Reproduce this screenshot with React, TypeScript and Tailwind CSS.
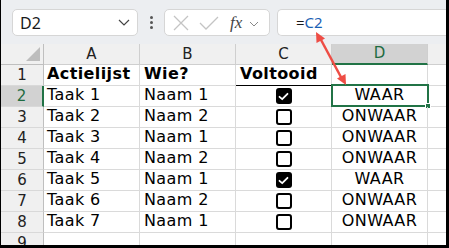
import { ReactNode } from "react"

const rows = [
  { task: "Taak 1", who: "Naam 1", done: true },
  { task: "Taak 2", who: "Naam 2", done: false },
  { task: "Taak 3", who: "Naam 1", done: false },
  { task: "Taak 4", who: "Naam 2", done: false },
  { task: "Taak 5", who: "Naam 1", done: true },
  { task: "Taak 6", who: "Naam 2", done: false },
  { task: "Taak 7", who: "Naam 1", done: false },
]

const cellFont = { fontFamily: '"DejaVu Sans", Verdana, sans-serif' }

const Checkbox = ({ checked }: { checked: boolean }) =>
  checked ? (
    <div className="flex size-[16px] items-center justify-center rounded-[3px] bg-black">
      <svg width="11" height="9" viewBox="0 0 11 9">
        <path d="M1.5 4.8 L4.2 7.2 L9.5 1.8" fill="none" stroke="white" strokeWidth="1.8" strokeLinecap="round" strokeLinejoin="round" />
      </svg>
    </div>
  ) : (
    <div className="size-[16px] rounded-[3px] border-2 border-black bg-white" />
  )

const RowHead = ({ n, active }: { n: number; active?: boolean }) => (
  <div
    className={`flex h-[21px] items-center justify-center border-b border-[#d9d9d9] text-[15px] ${
      active ? "border-r-2 border-r-[#217346] bg-[#d2d2d2] text-[#1e6b41]" : "border-r border-r-[#bfbfbf] bg-[#f0f0f0] text-[#222]"
    }`}
  >
    {n}
  </div>
)

const Cell = ({ children, className = "" }: { children?: ReactNode; className?: string }) => (
  <div className={`flex h-[21px] items-end border-r border-b border-[#dadada] pb-[2px] text-[16px] leading-[19px] tracking-[0.4px] text-black ${className}`}>
    {children}
  </div>
)

export default function App() {
  return (
    <div className="relative h-[248px] w-[449px] overflow-hidden border-b-[3px] border-l border-r-[3px] border-black bg-white">
      {/* formula bar */}
      <div className="flex h-[44px] items-start bg-[#eceef1] pt-[9px]" style={{ fontFamily: '"Noto Sans", "Open Sans", sans-serif' }}>
        <div className="ml-[11px] flex h-[27px] w-[126px] items-center justify-between rounded-[5px] border border-[#d6d6d6] bg-white pl-[7px] pr-[7px]">
          <span className="text-[16px] text-[#1a1a1a]">D2</span>
          <svg width="12" height="7" viewBox="0 0 12 7">
            <path d="M1 1 L6 6 L11 1" fill="none" stroke="#444" strokeWidth="1.2" />
          </svg>
        </div>
        <div className="flex h-[27px] w-[26px] flex-col items-center justify-center gap-[2px]">
          <span className="size-[3px] rounded-full bg-[#555]" />
          <span className="size-[3px] rounded-full bg-[#555]" />
          <span className="size-[3px] rounded-full bg-[#555]" />
        </div>
        <div className="flex h-[27px] w-[106px] items-center rounded-[5px] border border-[#d6d6d6] bg-white pl-[7px]">
          <svg width="18" height="18" viewBox="0 0 18 18">
            <path d="M2 2 L16 16 M16 2 L2 16" stroke="#c4c4c4" strokeWidth="1.3" />
          </svg>
          <svg width="20" height="16" viewBox="0 0 20 16" className="ml-[9px]">
            <path d="M1 8 L7 14 L19 2" fill="none" stroke="#c4c4c4" strokeWidth="1.3" />
          </svg>
          <span className="ml-[11px] text-[17px] italic text-[#444]" style={{ fontFamily: '"Liberation Serif", serif' }}>
            fx
          </span>
          <svg width="10" height="6" viewBox="0 0 10 6" className="ml-[7px] mt-[2px]">
            <path d="M1 1 L5 5 L9 1" fill="none" stroke="#888" strokeWidth="1" />
          </svg>
        </div>
        <div className="ml-[7px] flex h-[27px] flex-1 items-center rounded-l-[5px] border border-r-0 border-[#d6d6d6] bg-white pl-[18px] text-[15px] text-[#1a1a1a]">
          =<span className="text-[#1a5fb4]">C2</span>
        </div>
      </div>

      {/* sheet */}
      <div className="grid grid-cols-[43px_96px_96px_96px_96px_1fr]" style={cellFont}>
        <div className="relative h-[21px] border-r border-b border-[#bfbfbf] bg-[#f0f0f0]">
          <svg width="14" height="14" viewBox="0 0 14 14" className="absolute bottom-[3px] right-[3px]">
            <path d="M14 0 L14 14 L0 14 Z" fill="#bdbdbd" />
          </svg>
        </div>
        {["A", "B", "C"].map((c) => (
          <div key={c} className="flex h-[21px] items-center justify-center border-r border-b border-[#cfcfcf] bg-[#f0f0f0] text-[15px] text-[#222]">
            {c}
          </div>
        ))}
        <div className="flex h-[21px] items-center justify-center border-r border-[#cfcfcf] border-b-2 border-b-[#217346] bg-[#d2d2d2] text-[15px] text-[#1e6b41]">
          D
        </div>
        <div className="h-[21px] border-b border-[#cfcfcf] bg-[#f0f0f0]" />

        <RowHead n={1} />
        <Cell className="pl-[3px] font-bold">Actielijst</Cell>
        <Cell className="pl-[4px] font-bold">Wie?</Cell>
        <Cell className="border-b-black pl-[4px] font-bold">Voltooid</Cell>
        <Cell />
        <Cell className="border-r-0" />

        {rows.map((r, i) => (
          <Row key={i} n={i + 2} {...r} />
        ))}

        <RowHead n={9} />
        <Cell />
        <Cell />
        <Cell />
        <Cell />
        <Cell className="border-r-0" />
      </div>

      {/* arrow from formula to selected cell */}
      <svg width="449" height="248" className="pointer-events-none absolute left-0 top-0">
        <line x1="319" y1="38" x2="341" y2="79" stroke="#ee4d45" strokeWidth="2.5" />
        <path d="M315 32 L315.5 43 L324 38.5 Z" fill="#ee4d45" />
        <path d="M345 85 L336 78.5 L344.5 74 Z" fill="#ee4d45" />
      </svg>
    </div>
  )
}

const Row = ({ n, task, who, done }: { n: number; task: string; who: string; done: boolean }) => {
  const active = n === 2
  return (
    <>
      <RowHead n={n} active={active} />
      <Cell className="pl-[3px]">{task}</Cell>
      <Cell className="pl-[4px]">{who}</Cell>
      <Cell className="items-center justify-center pb-0">
        <Checkbox checked={done} />
      </Cell>
      <Cell className="relative justify-center">
        {done ? "WAAR" : "ONWAAR"}
        {active && (
          <>
            <div className="absolute -top-[2px] -left-[1px] h-[23px] w-[98px] border-2 border-[#217346]" />
            <div className="absolute -right-[4px] -bottom-[3px] size-[6px] border border-white bg-[#217346]" />
          </>
        )}
      </Cell>
      <Cell className="border-r-0" />
    </>
  )
}
